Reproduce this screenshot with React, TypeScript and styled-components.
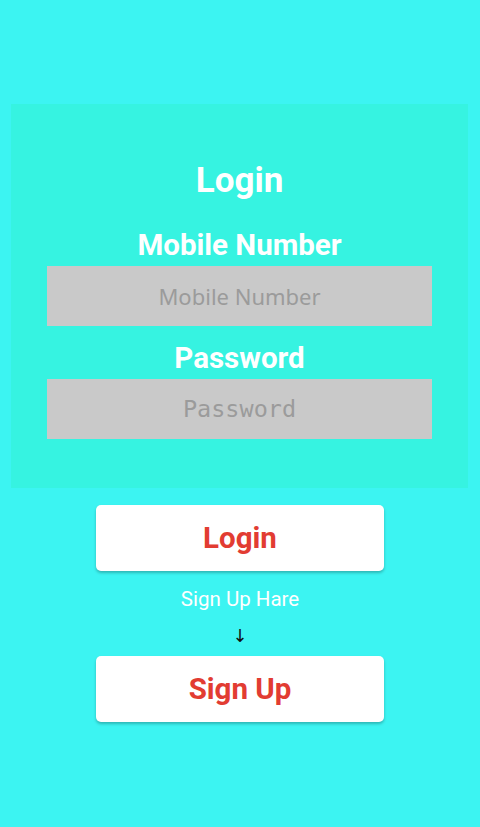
import React from "react";
import styled, { createGlobalStyle } from "styled-components";

const GlobalStyle = createGlobalStyle`
  html, body {
    margin: 0;
    padding: 0;
    background: #3cf4f2;
  }
  * {
    box-sizing: border-box;
  }
`;

const Screen = styled.div`
  width: 480px;
  height: 827px;
  background: #3cf4f2;
  display: flex;
  flex-direction: column;
  align-items: center;
  padding-top: 104px;
  font-family: Roboto, "Liberation Sans", sans-serif;
`;

const Card = styled.div`
  width: 457px;
  height: 384px;
  margin-left: -1px;
  background: #36f3e1;
  display: flex;
  flex-direction: column;
  align-items: center;
  padding-top: 58px;
`;

const Title = styled.div`
  color: #ffffff;
  font-size: 35px;
  font-weight: 700;
  line-height: 38px;
`;

const Label = styled.div<{ $top: number }>`
  color: #ffffff;
  font-size: 29.5px;
  font-weight: 700;
  line-height: 30px;
  margin-top: ${(p) => p.$top}px;
  margin-bottom: 6px;
`;

const Input = styled.input<{ $mono?: boolean }>`
  width: 385px;
  height: 60px;
  flex-shrink: 0;
  border: none;
  outline: none;
  background: #c9c9c9;
  text-align: center;
  font-size: ${(p) => (p.$mono ? "23.5px" : "22px")};
  font-family: ${(p) =>
    p.$mono ? '"DejaVu Sans Mono", monospace' : '"Noto Sans", "Open Sans", sans-serif'};
  color: #555;
  &::placeholder {
    color: #9b9b9b;
  }
`;

const Button = styled.button<{ $top: number }>`
  width: 288px;
  height: 66px;
  flex-shrink: 0;
  margin-top: ${(p) => p.$top}px;
  border: none;
  border-radius: 5px;
  background: #ffffff;
  box-shadow: 0 2px 3px rgba(0, 0, 0, 0.25);
  color: #e23c32;
  font-family: Roboto, "Liberation Sans", sans-serif;
  font-size: 29.5px;
  font-weight: 700;
`;

const Hint = styled.div`
  margin-top: 16px;
  color: #ffffff;
  font-size: 20.5px;
  line-height: 24px;
`;

const Arrow = styled.div`
  margin-top: 13px;
  color: #111;
  font-size: 18px;
  line-height: 24px;
  font-family: "DejaVu Sans", sans-serif;
`;

export default function App() {
  return (
    <>
      <GlobalStyle />
      <Screen>
        <Card>
          <Title>Login</Title>
          <Label $top={30}>Mobile Number</Label>
          <Input placeholder="Mobile Number" />
          <Label $top={17}>Password</Label>
          <Input $mono type="password" placeholder="Password" />
        </Card>
        <Button $top={17}>Login</Button>
        <Hint>Sign Up Hare</Hint>
        <Arrow>↓</Arrow>
        <Button $top={8}>Sign Up</Button>
      </Screen>
    </>
  );
}
